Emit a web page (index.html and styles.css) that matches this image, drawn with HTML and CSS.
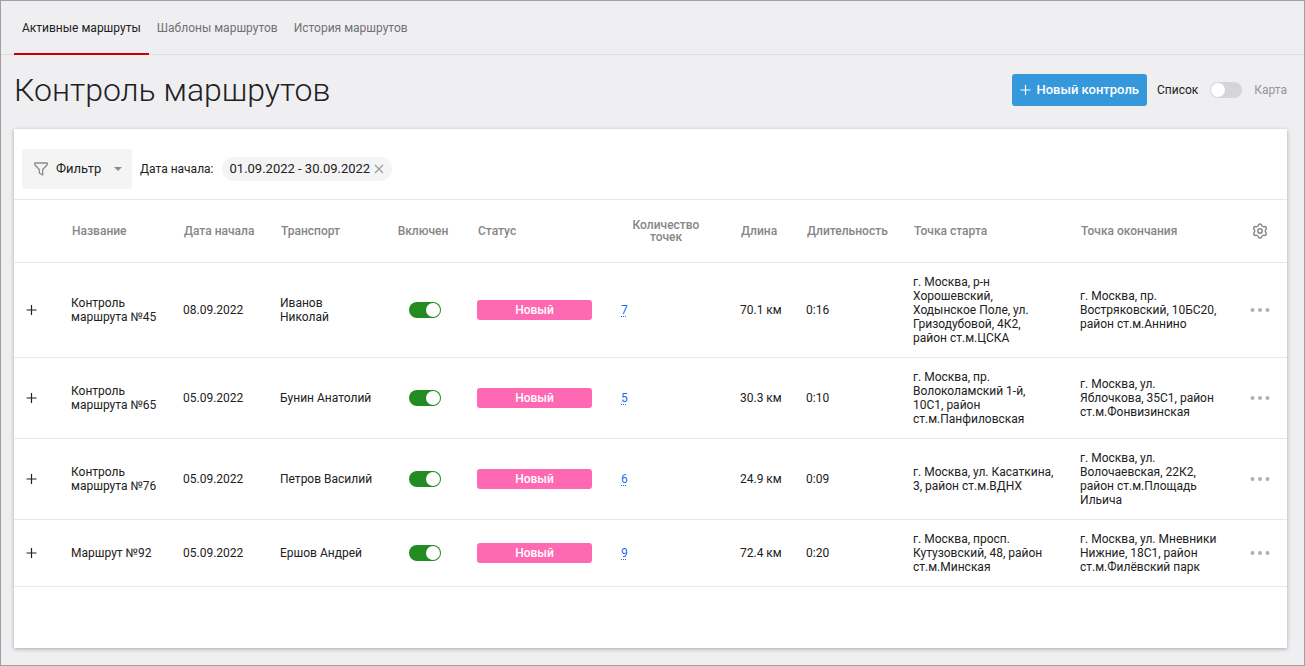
FILE: index.html
```html
<!DOCTYPE html>
<html lang="ru">
<head>
<meta charset="utf-8">
<title>Контроль маршрутов</title>
<link rel="stylesheet" href="styles.css">
</head>
<body>
<svg class="sprite" aria-hidden="true">
  <symbol id="plus" viewBox="0 0 12 12"><path d="M5.500 1v10M.5 6h10" fill="none" stroke="currentColor" stroke-width="1.2"/></symbol>
  <symbol id="dots" viewBox="0 0 20 4"><g fill="currentColor"><circle cx="2.500" cy="2" r="2"/><circle cx="10" cy="2" r="2"/><circle cx="17.500" cy="2" r="2"/></g></symbol>
  <path id="tooth" d="M5.250 3.240Q6 3.200 6.300 2.200Q6.600.9 8 .9T9.700 2.200Q10 3.200 10.750 3.240"/>
</svg>
<nav class="tabs">
  <a class="tab tab-active" href="#active">Активные маршруты</a>
  <a class="tab" href="#templates">Шаблоны маршрутов</a>
  <a class="tab" href="#history">История маршрутов</a>
</nav>
<header class="page-head">
  <h1 class="title">Контроль маршрутов</h1>
  <button class="btn-new" type="button"><svg class="icon-plus" aria-hidden="true"><use href="#plus"/></svg>Новый контроль</button>
  <label class="view-switch"><span>Список</span><input class="switch" type="checkbox"><span class="muted">Карта</span></label>
</header>
<main class="card">
  <div class="filters">
    <button class="btn-filter" type="button">
      <svg class="icon-funnel" viewBox="0 0 14 14" aria-hidden="true"><path d="M.8 1h12.400v1.700L8.700 7.500v5.500L5.300 11V7.500L.8 2.700z" fill="none" stroke="currentColor" stroke-width="1.300" stroke-linejoin="round"/></svg>
      <span>Фильтр</span>
      <svg class="icon-caret" viewBox="0 0 8 4" aria-hidden="true"><path d="M0 0h8L4 4z" fill="currentColor"/></svg>
    </button>
    <span class="filter-label">Дата начала:</span>
    <span class="chip">01.09.2022 - 30.09.2022
      <button class="chip-close" type="button" aria-label="Удалить"><svg class="icon-close" viewBox="0 0 10 10" aria-hidden="true"><path d="M1 1l8 8M9 1L1 9" stroke="currentColor" stroke-width="1.200"/></svg></button>
    </span>
  </div>
  <table class="routes">
    <colgroup>
      <col class="c-expand"><col class="c-name"><col class="c-date"><col class="c-transport"><col class="c-on"><col class="c-status"><col class="c-points"><col class="c-length"><col class="c-time"><col class="c-address"><col class="c-end"><col class="c-actions">
    </colgroup>
    <thead>
      <tr>
        <th></th><th>Название</th><th>Дата начала</th><th>Транспорт</th><th class="center on">Включен</th><th>Статус</th><th class="center">Количество<br>точек</th><th>Длина</th><th>Длительность</th><th>Точка старта</th><th>Точка окончания</th>
        <th class="center"><button class="icon-btn gear" type="button" aria-label="Настройки"><svg class="icon-gear" viewBox="0 0 16 16" aria-hidden="true"><g fill="none" stroke="currentColor" stroke-width="1.500" stroke-linejoin="round"><use href="#tooth"/><use href="#tooth" transform="rotate(60 8 8)"/><use href="#tooth" transform="rotate(120 8 8)"/><use href="#tooth" transform="rotate(180 8 8)"/><use href="#tooth" transform="rotate(240 8 8)"/><use href="#tooth" transform="rotate(300 8 8)"/><circle cx="8" cy="8" r="2.200"/></g></svg></button></th>
      </tr>
    </thead>
    <tbody>
      <tr>
        <td class="expand"><button class="icon-btn" type="button" aria-label="Развернуть"><svg class="icon-plus"><use href="#plus"/></svg></button></td>
        <td>Контроль маршрута №45</td><td>08.09.2022</td><td>Иванов Николай</td>
        <td class="center"><input class="switch" type="checkbox" aria-label="Включен" checked></td>
        <td><span class="badge">Новый</span></td><td class="points"><a class="link" href="#p1">7</a></td><td>70.1 км</td><td>0:16</td>
        <td class="address">г. Москва, р-н Хорошевский, Ходынское Поле, ул. Гризодубовой, 4К2, район ст.м.ЦСКА</td>
        <td class="address">г. Москва, пр. Востряковский, 10БС20, район ст.м.Аннино</td>
        <td class="center"><button class="icon-btn more" type="button" aria-label="Действия"><svg class="icon-dots"><use href="#dots"/></svg></button></td>
      </tr>
      <tr>
        <td class="expand"><button class="icon-btn" type="button" aria-label="Развернуть"><svg class="icon-plus"><use href="#plus"/></svg></button></td>
        <td>Контроль маршрута №65</td><td>05.09.2022</td><td>Бунин Анатолий</td>
        <td class="center"><input class="switch" type="checkbox" aria-label="Включен" checked></td>
        <td><span class="badge">Новый</span></td><td class="points"><a class="link" href="#p2">5</a></td><td>30.3 км</td><td>0:10</td>
        <td class="address">г. Москва, пр. Волоколамский 1-й, 10С1, район ст.м.Панфиловская</td>
        <td class="address">г. Москва, ул. Яблочкова, 35С1, район ст.м.Фонвизинская</td>
        <td class="center"><button class="icon-btn more" type="button" aria-label="Действия"><svg class="icon-dots"><use href="#dots"/></svg></button></td>
      </tr>
      <tr>
        <td class="expand"><button class="icon-btn" type="button" aria-label="Развернуть"><svg class="icon-plus"><use href="#plus"/></svg></button></td>
        <td>Контроль маршрута №76</td><td>05.09.2022</td><td>Петров Василий</td>
        <td class="center"><input class="switch" type="checkbox" aria-label="Включен" checked></td>
        <td><span class="badge">Новый</span></td><td class="points"><a class="link" href="#p3">6</a></td><td>24.9 км</td><td>0:09</td>
        <td class="address">г. Москва, ул. Касаткина, 3, район ст.м.ВДНХ</td>
        <td class="address">г. Москва, ул. Волочаевская, 22К2, район ст.м.Площадь Ильича</td>
        <td class="center"><button class="icon-btn more" type="button" aria-label="Действия"><svg class="icon-dots"><use href="#dots"/></svg></button></td>
      </tr>
      <tr>
        <td class="expand"><button class="icon-btn" type="button" aria-label="Развернуть"><svg class="icon-plus"><use href="#plus"/></svg></button></td>
        <td>Маршрут №92</td><td>05.09.2022</td><td>Ершов Андрей</td>
        <td class="center"><input class="switch" type="checkbox" aria-label="Включен" checked></td>
        <td><span class="badge">Новый</span></td><td class="points"><a class="link" href="#p4">9</a></td><td>72.4 км</td><td>0:20</td>
        <td class="address">г. Москва, просп. Кутузовский, 48, район ст.м.Минская</td>
        <td class="address">г. Москва, ул. Мневники Нижние, 18С1, район ст.м.Филёвский парк</td>
        <td class="center"><button class="icon-btn more" type="button" aria-label="Действия"><svg class="icon-dots"><use href="#dots"/></svg></button></td>
      </tr>
    </tbody>
  </table>
</main>
</body>
</html>
```
FILE: styles.css
```css
* { box-sizing: border-box; }
body {
  margin: 0;
  min-height: 100vh;
  display: flex;
  flex-direction: column;
  border: 1px solid #a0a0a0;
  background: #efeff2;
  color: #212121;
  font: 12px/14px Roboto, "Liberation Sans", sans-serif;
}
button { margin: 0; padding: 0; border: 0; background: none; color: inherit; font: inherit; cursor: pointer; }
svg { display: block; }
.sprite { position: absolute; width: 0; height: 0; }

.tabs { display: flex; height: 54px; padding-left: 13px; border-bottom: 1px solid #dcdde0; }
.tab { height: 54px; padding: 0 8px; line-height: 54px; color: #6f7074; text-decoration: none; }
.tab-active { color: #212121; border-bottom: 2px solid #c70000; }

.page-head { display: flex; align-items: center; height: 74px; padding: 0 17px 4px 13px; }
.title { flex: 1; margin: 0; font-size: 32px; line-height: 42px; font-weight: 300; }
.btn-new {
  display: flex; align-items: center; gap: 4px; height: 32px; padding: 0 8px;
  border-radius: 3px; background: #3598db; color: #fff; font-size: 13px; font-weight: 500;
}
.icon-plus { width: 12px; height: 12px; }
.view-switch { display: flex; align-items: center; gap: 12px; margin-left: 10px; }
.muted { color: #939598; }

.switch {
  appearance: none; display: inline-block; width: 32px; height: 16px; margin: 0; padding: 1px;
  border-radius: 8px; background: #d4d5d9; vertical-align: middle; cursor: pointer;
}
.switch::before { content: ""; display: block; width: 14px; height: 14px; border-radius: 50%; background: #fff; }
.switch:checked { background: #228b22; }
.switch:checked::before { margin-left: auto; }

.card {
  flex: 1; margin: 0 17px 17px 13px; background: #fff;
  box-shadow: 0 1px 4px rgba(0, 0, 0, .3);
}
.filters { display: flex; align-items: center; height: 70px; padding: 10px 8px 0; }
.btn-filter {
  display: flex; align-items: center; width: 110px; height: 40px; padding: 0 10px 0 12px;
  border-radius: 3px; background: #f4f4f4; font-size: 13px;
}
.icon-funnel { width: 14px; height: 14px; margin-right: 8px; color: #8b8b8b; }
.icon-caret { width: 8px; height: 4px; margin-left: auto; color: #8b8b8b; }
.filter-label { margin: 0 8px; }
.chip {
  display: flex; align-items: center; gap: 4px; height: 24px; padding: 0 8px;
  border-radius: 12px; background: #f4f4f4; font-size: 13px;
}
.chip-close { color: #9b9b9b; }
.icon-close { width: 10px; height: 10px; }

.routes { width: 100%; table-layout: fixed; border-collapse: separate; border-spacing: 0; }
.c-expand { width: 49px; }
.c-name { width: 112px; }
.c-date { width: 97px; }
.c-transport { width: 109px; }
.c-on { width: 88px; }
.c-status { width: 131px; }
.c-points { width: 132px; }
.c-length { width: 66px; }
.c-time { width: 107px; }
.c-address { width: 167px; }
.c-end { width: 161px; }
.c-actions { width: 54px; }
.routes th, .routes td { padding: 12px 8px; border-bottom: 1px solid #e8e8e8; text-align: left; vertical-align: middle; }
.routes th { height: 64px; padding: 12px 7px 12px 9px; border-top: 1px solid #e8e8e8; color: #868686; font-weight: 500; line-height: 12px; }
.routes .center { padding: 12px 8px; text-align: center; }
.routes .on { padding-right: 12px; }
.routes .expand { padding-left: 12px; }
.routes .points { padding-left: 21px; }
.routes .address { padding-right: 16px; }
.badge {
  display: block; height: 20px; border-radius: 3px; background: #ff69b4;
  color: #fff; line-height: 20px; text-align: center; font-weight: 500;
}
.link { color: #1a6cf0; text-decoration: underline dotted 1px; text-underline-offset: 2px; }
.icon-btn { display: block; }
.center .icon-btn { margin: 0 auto; }
.more { color: #b0b0b0; }
.gear { color: #868686; }
.icon-dots { width: 20px; height: 4px; }
.icon-gear { width: 16px; height: 16px; }
```
